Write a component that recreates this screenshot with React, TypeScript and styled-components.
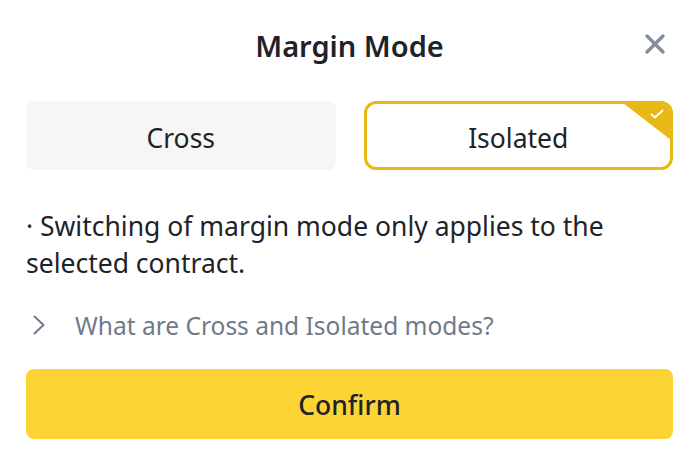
import React, { useState } from "react";
import styled, { createGlobalStyle } from "styled-components";

const GlobalStyle = createGlobalStyle`
  html, body {
    margin: 0;
    padding: 0;
    background: #ffffff;
  }
  body {
    font-family: "Noto Sans", "Open Sans", sans-serif;
    color: #1e2329;
  }
`;

const Sheet = styled.div`
  width: 700px;
  height: 476px;
  box-sizing: border-box;
  padding: 0 27px 0 26px;
  display: flex;
  flex-direction: column;
  background: #ffffff;
`;

const Header = styled.div`
  position: relative;
  height: 90px;
  display: flex;
  align-items: center;
  justify-content: center;
`;

const Title = styled.h2`
  margin: 0;
  font-size: 29px;
  font-weight: 600;
  color: #1e2329;
`;

const CloseButton = styled.button`
  position: absolute;
  right: 4px;
  top: 30px;
  width: 28px;
  height: 28px;
  padding: 0;
  border: none;
  background: none;
  display: flex;
  align-items: center;
  justify-content: center;
  cursor: pointer;
`;

const Options = styled.div`
  display: grid;
  grid-template-columns: 1fr 1fr;
  gap: 28px;
  margin-top: 11px;
`;

const Option = styled.button<{ $active: boolean }>`
  position: relative;
  height: 69px;
  box-sizing: border-box;
  border-radius: ${(p) => (p.$active ? "12px" : "8px")};
  border: ${(p) => (p.$active ? "3px solid #e8b814" : "none")};
  background: ${(p) => (p.$active ? "#ffffff" : "#f6f6f6")};
  overflow: hidden;
  font-family: "Noto Sans", "Open Sans", sans-serif;
  font-size: 26.5px;
  font-weight: 400;
  color: #1e2329;
  display: flex;
  align-items: center;
  justify-content: center;
  padding: 4px 0 0 0;
  cursor: pointer;
`;

const Corner = styled.span`
  position: absolute;
  top: -1px;
  right: -1px;
  width: 0;
  height: 0;
  border-top: 37px solid #e8b814;
  border-left: 48px solid transparent;
`;

const CornerCheck = styled.svg`
  position: absolute;
  top: 5px;
  right: 6px;
`;

const Note = styled.p`
  margin: 38px 0 0 0;
  font-size: 26.5px;
  line-height: 37px;
  color: #1e2329;
`;

const HelpRow = styled.div`
  height: 34px;
  display: flex;
  align-items: center;
  gap: 30px;
  margin-top: 26px;
  padding-left: 7px;
  font-size: 24.5px;
  color: #707a8a;
`;

const ConfirmButton = styled.button`
  margin-top: 27px;
  height: 70px;
  border: none;
  border-radius: 8px;
  background: #fcd535;
  font-family: "Noto Sans", "Open Sans", sans-serif;
  font-size: 26.5px;
  font-weight: 500;
  color: #1e2329;
  padding: 2px 0 0 0;
  cursor: pointer;
`;

export default function App() {
  const [mode, setMode] = useState<"cross" | "isolated">("isolated");

  return (
    <>
      <GlobalStyle />
      <Sheet>
        <Header>
          <Title>Margin Mode</Title>
          <CloseButton aria-label="close">
            <svg width="22" height="22" viewBox="0 0 22 22">
              <path
                d="M3 3 L19 19 M19 3 L3 19"
                stroke="#848e9c"
                strokeWidth="3.4"
                strokeLinecap="round"
              />
            </svg>
          </CloseButton>
        </Header>
        <Options>
          <Option $active={mode === "cross"} onClick={() => setMode("cross")}>
            {mode === "cross" && <Corner />}
            Cross
          </Option>
          <Option
            $active={mode === "isolated"}
            onClick={() => setMode("isolated")}
          >
            {mode === "isolated" && (
              <>
                <Corner />
                <CornerCheck width="14" height="10" viewBox="0 0 14 10">
                  <path
                    d="M1.5 5.5 L5 8.5 L12.5 1.5"
                    fill="none"
                    stroke="#ffffff"
                    strokeWidth="2"
                    strokeLinecap="round"
                    strokeLinejoin="round"
                  />
                </CornerCheck>
              </>
            )}
            Isolated
          </Option>
        </Options>
        <Note>
          · Switching of margin mode only applies to the selected contract.
        </Note>
        <HelpRow>
          <svg width="12" height="20" viewBox="0 0 12 20">
            <path
              d="M1.5 1.5 L10.5 10 L1.5 18.5"
              fill="none"
              stroke="#707a8a"
              strokeWidth="2"
              strokeLinecap="round"
              strokeLinejoin="round"
            />
          </svg>
          What are Cross and Isolated modes?
        </HelpRow>
        <ConfirmButton>Confirm</ConfirmButton>
      </Sheet>
    </>
  );
}
